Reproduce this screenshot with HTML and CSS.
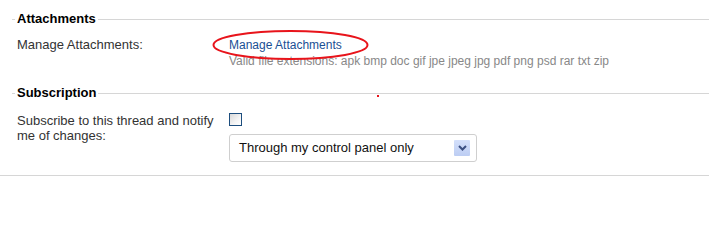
FILE: index.html
```html
<!DOCTYPE html>
<html>
<head>
<meta charset="utf-8">
<link rel="stylesheet" href="styles.css">
</head>
<body>
<div class="page">
  <fieldset class="section section-attach">
    <legend>Attachments</legend>
    <div class="row row-attach">
      <div class="label">Manage Attachments:</div>
      <div class="field">
        <span class="link-wrap">
          <a class="link" href="#">Manage Attachments</a>
          <svg class="circle" width="159" height="32" viewBox="0 0 159 32"><ellipse cx="79.5" cy="16" rx="77" ry="14" fill="none" stroke="#e8141b" stroke-width="2"/></svg>
        </span>
        <div class="hint">Valid file extensions: apk bmp doc gif jpe jpeg jpg pdf png psd rar txt zip</div>
      </div>
    </div>
    <span class="dot"></span>
  </fieldset>
  <fieldset class="section section-sub">
    <legend>Subscription</legend>
    <div class="row row-sub">
      <div class="label">Subscribe to this thread and notify me of changes:</div>
      <div class="field">
        <span class="checkbox"></span>
        <div class="select">
          <span class="select-text">Through my control panel only</span>
          <span class="select-arrow"><svg width="9" height="6" viewBox="0 0 9 6"><path d="M1 1 L4.5 4.5 L8 1" fill="none" stroke="#3b4f82" stroke-width="2"/></svg></span>
        </div>
      </div>
    </div>
  </fieldset>
  <div class="divider"></div>
</div>
</body>
</html>
```

FILE: styles.css
```css
html, body {
  margin: 0;
  padding: 0;
  background: #fff;
}
body {
  font-family: "Liberation Sans", Arial, sans-serif;
  color: #333;
}
.page {
  padding-top: 11px;
}
.section {
  position: relative;
  margin: 0 0 0 12px;
  padding: 0 0 0 3px;
  border: 0;
  border-top: 1px solid #d6d6d6;
  min-width: 0;
}
.section legend {
  padding: 0 2px;
  font-size: 13px;
  font-weight: bold;
  line-height: 16px;
  color: #000;
}
.section-attach {
  padding-bottom: 16px;
}
.section-sub {
  padding-bottom: 13px;
}
.row {
  display: grid;
  grid-template-columns: 212px 1fr;
  padding-left: 2px;
}
.row-attach {
  padding-top: 10px;
}
.row-sub {
  padding-top: 12px;
}
.label {
  font-size: 13px;
  color: #333;
}
.row-attach .label {
  line-height: 16px;
}
.row-sub .label {
  line-height: 15px;
  padding-right: 10px;
}
.field {
  display: flex;
  flex-direction: column;
  align-items: flex-start;
  font-size: 12px;
  line-height: 16px;
}
.link-wrap {
  position: relative;
  display: inline-block;
}
.link {
  color: #1a4f94;
  text-decoration: none;
  font-size: 12px;
}
.circle {
  position: absolute;
  left: -18px;
  top: -8px;
  pointer-events: none;
}
.hint {
  color: #888;
  font-size: 12px;
}
.dot {
  position: absolute;
  left: 365px;
  top: 68px;
  width: 2px;
  height: 2px;
  background: #e8141b;
}
.checkbox {
  display: block;
  width: 13px;
  height: 13px;
  box-sizing: border-box;
  border: 1px solid #1d4e7e;
  background: linear-gradient(135deg, #d8d8d8 0%, #f4f4f4 60%, #fff 100%);
  margin-bottom: 8px;
}
.select {
  width: 248px;
  height: 28px;
  box-sizing: border-box;
  border: 1px solid #cfcfcf;
  border-radius: 3px;
  display: flex;
  align-items: center;
  justify-content: space-between;
  padding: 0 6px 0 9px;
  background: #fff;
}
.select-text {
  font-size: 13px;
  color: #111;
  line-height: 16px;
}
.select-arrow {
  width: 16px;
  height: 16px;
  display: flex;
  align-items: center;
  justify-content: center;
  background: linear-gradient(#d4e0fb, #bccdf3);
  border-radius: 1px;
}
.divider {
  border-top: 1px solid #d6d6d6;
}
```
